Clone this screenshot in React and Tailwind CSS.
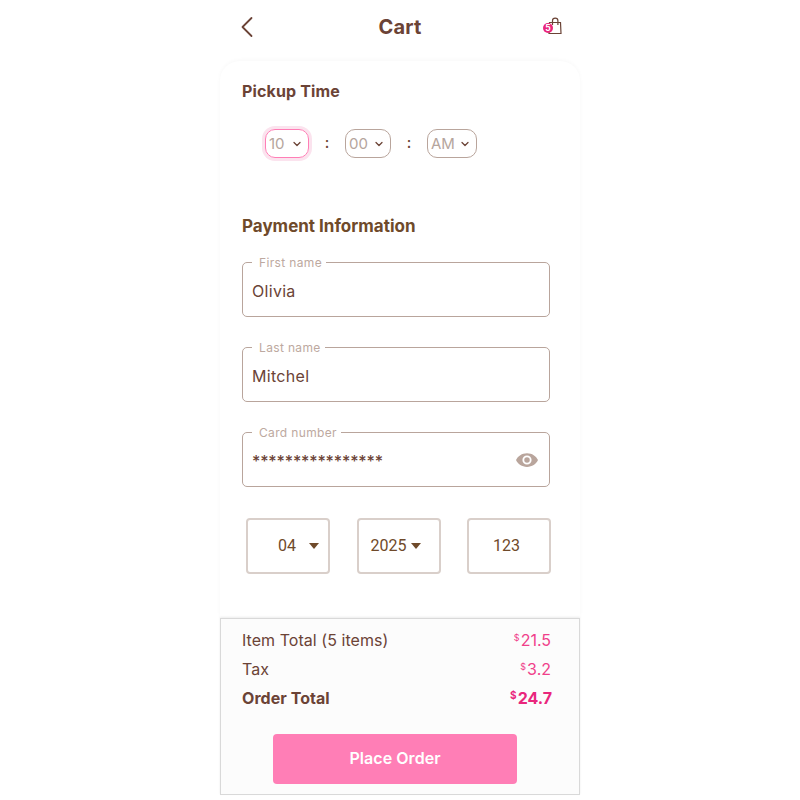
import React from 'react';
import { ChevronLeft, ChevronDown } from 'lucide-react';

const Field = ({ label, value, wide, children }) => (
  <div className="relative h-[55px] w-[308px] rounded-[5px] border border-[#b9a59c] flex items-center pl-[9px] pr-[10px] pt-[2px]">
    <span className="absolute left-[9px] -top-[8px] bg-white pl-[7px] pr-[4px] text-[12px] leading-[15px] tracking-[0.35px] text-[#bda9a0]">{label}</span>
    <span className={`text-[16px] text-[#6b4336] ${wide ? '-tracking-[0.15px] font-medium' : 'tracking-[0.3px]'}`}>{value}</span>
    {children}
  </div>
);

const TimeSelect = ({ value, className }) => (
  <div className={`h-[29px] rounded-[10px] border flex items-center pl-[3px] text-[15px] text-[#b5a59d] ${className}`}>
    <span className="flex-1 pt-[1px]">{value}</span>
    <ChevronDown size={12} strokeWidth={2.5} className="text-[#6b4336] mr-[5px]" />
  </div>
);

const DateBox = ({ value, arrow, textClass }) => (
  <div className="h-[56px] w-[84px] rounded-[4px] border-2 border-[#d9cfca] flex items-center text-[16px] text-[#6f4a2a]" style={{ fontFamily: 'Roboto, sans-serif' }}>
    <span className={textClass}>{value}</span>
    {arrow && <span className={`w-0 h-0 border-x-[5.5px] border-x-transparent border-t-[6px] border-t-[#6f4a2a] ${arrow}`} />}
  </div>
);

const Row = ({ label, amount, bold }) => (
  <div className={`flex items-center justify-between h-[29px] pl-[21px] ${bold ? 'pr-[27px]' : 'pr-[28px]'}`}>
    <span className={`text-[16px] tracking-[0.05px] text-[#6b4336] ${bold ? 'font-bold' : ''}`}>{label}</span>
    <span className={bold ? 'font-bold text-[16px] text-[#e9277c]' : 'text-[16px] text-[#f0408a]'}>
      <sup className={`${bold ? 'text-[10px]' : 'text-[9px]'} -top-[5px] mr-[1px]`}>$</sup>{amount}
    </span>
  </div>
);

export default function App() {
  return (
    <div className="w-[800px] h-[800px] bg-white overflow-hidden" style={{ fontFamily: 'Inter, sans-serif' }}>
      <div className="w-[360px] mx-auto h-[795px] flex flex-col">
        <header className="h-[54px] shrink-0 grid grid-cols-[1fr_auto_1fr] items-center pl-[9px] pr-[17px]">
          <ChevronLeft size={36} strokeWidth={1.2} className="text-[#6b4336] justify-self-start" />
          <h1 className="text-[20px] font-bold text-[#6b4336] tracking-[0.2px] ml-[8px]">Cart</h1>
          <svg className="justify-self-end" width="20" height="20" viewBox="0 0 20 20" fill="none">
            <path d="M6.500 5.500h11l0.500 11h-12z" stroke="#6b4336" strokeWidth="1.200" />
            <path d="M9.500 8V3.800a2.700 2.700 0 0 1 5.400 0V8" stroke="#6b4336" strokeWidth="1.200" />
            <circle cx="5" cy="11" r="5" fill="#e9277c" />
            <text x="5" y="14" textAnchor="middle" fontSize="8.500" fontWeight="700" fill="#fff">5</text>
          </svg>
        </header>

        <main className="flex-1 mt-[7px] rounded-t-[20px] shadow-[0_-1px_4px_rgba(0,0,0,0.03)] pl-[22px]">
          <h2 className="mt-[20px] text-[16px] leading-[20px] font-bold tracking-[0.15px] text-[#6b4336]">Pickup Time</h2>

          <div className="mt-[28px] ml-[23px] flex items-center">
            <TimeSelect value="10" className="w-[44px] border-[#ff7eb6] shadow-[0_0_0_3px_#fbe3ee]" />
            <span className="w-[36px] text-center text-[15px] font-medium text-[#6b4336]">:</span>
            <TimeSelect value="00" className="w-[46px] border-[#b9a59c]" />
            <span className="w-[36px] text-center text-[15px] font-medium text-[#6b4336]">:</span>
            <TimeSelect value="AM" className="w-[50px] border-[#b9a59c]" />
          </div>

          <h2 className="mt-[57px] text-[17px] leading-[22px] font-bold text-[#6f4a2a]">Payment Information</h2>

          <div className="mt-[25px] flex flex-col gap-[30px]">
            <Field label="First name" value="Olivia" />
            <Field label="Last name" value="Mitchel" />
            <Field label="Card number" value="****************" wide>
              <svg className="ml-auto -translate-x-[1px] -translate-y-[1px]" width="22" height="16" viewBox="0 0 24 16">
                <path fillRule="evenodd" fill="#b9a59c" d="M12 0.5C6.5 0.5 2 3.6 0 8c2 4.4 6.5 7.5 12 7.500s10-3.100 12-7.500C22 3.600 17.500 0.500 12 0.500zM12 13a5 5 0 1 1 0-10 5 5 0 0 1 0 10zM12 5a3 3 0 1 0 0 6 3 3 0 0 0 0-6z" />
              </svg>
            </Field>
          </div>

          <div className="mt-[31px] ml-[4px] flex gap-[26.5px]">
            <DateBox value="04" arrow="ml-[13px]" textClass="ml-[30px]" />
            <DateBox value="2025" arrow="ml-[5px]" textClass="ml-[12px]" />
            <DateBox value="123" textClass="ml-[24px]" />
          </div>
        </main>

        <footer className="h-[177px] shrink-0 bg-[#fcfcfc] border border-[#d9d9d9] shadow-[0_-1px_2px_rgba(0,0,0,0.08)] pt-[6px]">
          <Row label="Item Total (5 items)" amount="21.5" />
          <Row label="Tax" amount="3.2" />
          <Row label="Order Total" amount="24.7" bold />
          <button className="block mt-[22px] ml-[52px] w-[244px] h-[50px] rounded-[4px] bg-[#ff7eb6] text-white text-[16px] font-semibold pb-[2px] tracking-[0.05px]">Place Order</button>
        </footer>
      </div>
    </div>
  );
}
